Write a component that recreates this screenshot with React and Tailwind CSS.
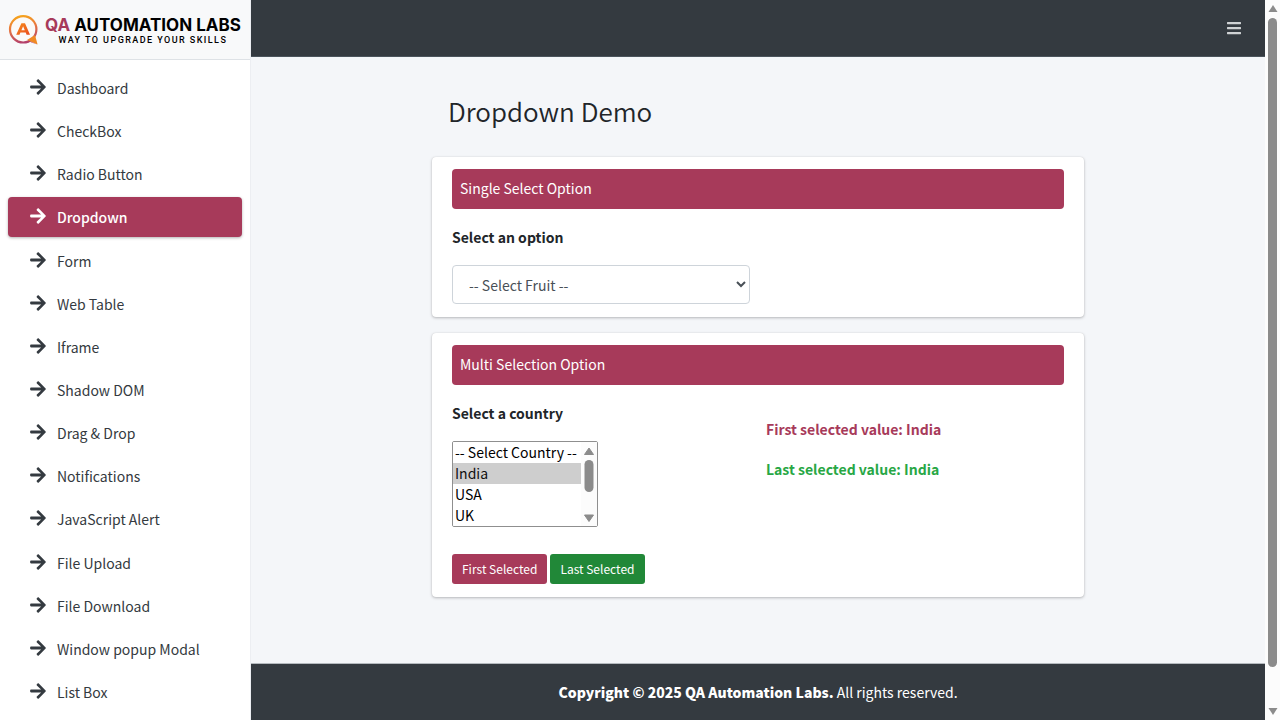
import { useState } from "react";
import { FaArrowRight, FaBars } from "react-icons/fa";

const links = [
  "Dashboard",
  "CheckBox",
  "Radio Button",
  "Dropdown",
  "Form",
  "Web Table",
  "Iframe",
  "Shadow DOM",
  "Drag & Drop",
  "Notifications",
  "JavaScript Alert",
  "File Upload",
  "File Download",
  "Window popup Modal",
  "List Box",
];

const countries = ["India", "USA", "UK", "China", "Japan", "Canada", "Brazil"];

function Logo() {
  return (
    <a href="#home" className="flex h-[60px] shrink-0 items-center gap-[7px] border-b border-[#dee2e6] bg-[#f8f9fa] pl-2">
      <svg viewBox="0 0 30 32" className="h-8 w-[30px] shrink-0" aria-hidden="true">
        <defs>
          <linearGradient id="ring" x1="0.4" y1="0" x2="0.6" y2="1">
            <stop offset="0" stopColor="#f5a21c" />
            <stop offset="0.4" stopColor="#ea7a3e" />
            <stop offset="1" stopColor="#b23f6c" />
          </linearGradient>
          <linearGradient id="letter" x1="0" y1="0" x2="1" y2="1">
            <stop offset="0" stopColor="#f7901e" />
            <stop offset="1" stopColor="#ea4a1c" />
          </linearGradient>
        </defs>
        <circle cx="15.2" cy="15.3" r="13.2" fill="#fbfaf8" stroke="url(#ring)" strokeWidth="2.2" />
        <path
          d="M13.4 9.2 H17 L22 20.8 H18.6 L17.7 18.6 H12.4 L11.5 20.8 H8.2 Z M15.1 12.3 L13.4 16.2 H16.8 Z"
          fill="url(#letter)"
          fillRule="evenodd"
        />
        <path d="M19 26 L27 21 L29.6 30.6 Z" fill="#f08a24" />
        <path d="M19 26 L29.6 30.6 L23.5 28.6 Z" fill="#b23f6c" />
      </svg>
      <span className="whitespace-nowrap pt-0.5 text-center font-[Inter,sans-serif] text-black">
        <span className="block text-[17px] font-bold leading-[18px]">
          <span className="text-[#a73a5a]">QA</span> AUTOMATION LABS
        </span>
        <span className="block font-[Roboto,sans-serif] text-[9px] leading-3 font-medium tracking-[0.16em]">WAY TO UPGRADE YOUR SKILLS</span>
      </span>
    </a>
  );
}

function Sidebar() {
  return (
    <aside className="flex w-[251px] shrink-0 flex-col overflow-hidden border-r border-[#eceef2] bg-white">
      <Logo />
      <nav className="flex max-h-[660px] flex-1 flex-col justify-between px-2 py-2">
        {links.map((name) => (
          <a
            key={name}
            href="#page"
            className={
              name === "Dropdown"
                ? "flex h-10 shrink-0 items-center gap-2.5 rounded bg-[#a73a5a] pl-[21px] font-medium text-white shadow-[0_1px_3px_rgba(0,0,0,0.3)]"
                : "flex h-10 shrink-0 items-center gap-2.5 rounded pl-[21px] text-[#343a40]"
            }
          >
            <FaArrowRight className="mb-0.5 h-[18px] w-[18px]" />
            {name}
          </a>
        ))}
      </nav>
    </aside>
  );
}

function Card({ title, children }) {
  return (
    <section className="rounded bg-white px-5 pt-3 pb-[13px] shadow-[0_0_1px_rgba(0,0,0,0.13),0_1px_3px_rgba(0,0,0,0.25)]">
      <h2 className="flex h-10 items-center rounded bg-[#a73a5a] px-2 pb-0.5 text-white">{title}</h2>
      {children}
    </section>
  );
}

function ListScrollbar() {
  return (
    <svg viewBox="0 0 16 84" className="pointer-events-none absolute top-px right-px h-[84px] w-4" aria-hidden="true">
      <rect width="16" height="84" fill="#fcfcfc" />
      <path d="M8 6 L12.5 12.5 H3.5 Z" fill="#8b8b8b" stroke="#8b8b8b" strokeLinejoin="round" />
      <rect x="3.5" y="18" width="9" height="32" rx="4.5" fill="#8b8b8b" />
      <path d="M8 79.5 L12.5 73 H3.5 Z" fill="#8b8b8b" stroke="#8b8b8b" strokeLinejoin="round" />
    </svg>
  );
}

export default function App() {
  const [picked, setPicked] = useState(["India"]);
  const [first, setFirst] = useState("India");
  const [last, setLast] = useState("India");

  return (
    <div className="flex h-screen overflow-hidden bg-[#f4f6f9] font-['Noto_Sans_CJK_SC',sans-serif] text-[14px] leading-6 text-[#212529]">
      <Sidebar />
      <div className="flex min-w-0 flex-1 flex-col">
        <header className="flex h-[57px] shrink-0 items-center justify-end border-b border-[#4b545c] bg-[#343a40] pr-[23px]">
          <button type="button" aria-label="Menu" className="text-[#cfd2d4]">
            <FaBars className="h-4 w-4" />
          </button>
        </header>

        <main className="mx-auto w-full max-w-[652px] flex-1 pt-8">
          <h1 className="mb-6 pl-4 text-[26px] leading-[44px] font-[350]">Dropdown Demo</h1>
          <div className="flex flex-col gap-4">
            <Card title="Single Select Option">
              <div className="mt-4 grid grid-cols-2 gap-4">
                <div>
                  <label htmlFor="fruit" className="mb-4 block leading-6 font-bold">
                    Select an option
                  </label>
                  <select id="fruit" className="block h-[39px] w-full rounded border border-[#ced4da] bg-white px-3 text-[#495057]">
                    <option>-- Select Fruit --</option>
                    <option>Apple</option>
                    <option>Mango</option>
                  </select>
                </div>
              </div>
            </Card>

            <Card title="Multi Selection Option">
              <div className="mt-4 grid grid-cols-2 gap-4">
                <div>
                  <label htmlFor="country" className="mb-4 block leading-6 font-bold">
                    Select a country
                  </label>
                  <div className="relative w-[146px]">
                    <select
                      id="country"
                      multiple
                      size={4}
                      value={picked}
                      onChange={(e) => setPicked(Array.from(e.target.selectedOptions, (o) => o.value))}
                      className="block h-[86px] w-full rounded-[2px] border border-[#8f8f8f] bg-white text-black"
                    >
                      <option value="" className="h-[21px] px-0.5">-- Select Country --</option>
                      {countries.map((c) => (
                        <option key={c} value={c} className="h-[21px] px-0.5">
                          {c}
                        </option>
                      ))}
                    </select>
                    <ListScrollbar />
                  </div>
                </div>
                <div className="flex flex-col gap-4 pt-4 font-bold">
                  <p className="text-[#a73a5a]">First selected value: {first}</p>
                  <p className="text-[#28a745]">Last selected value: {last}</p>
                </div>
              </div>
              <div className="mt-[27px] flex gap-[3px] text-[12px] text-white">
                <button type="button" onClick={() => setFirst(picked[0])} className="h-[30px] rounded-[3px] bg-[#a73a5a] px-2.5">
                  First Selected
                </button>
                <button type="button" onClick={() => setLast(picked[picked.length - 1])} className="h-[30px] rounded-[3px] bg-[#218838] px-2.5">
                  Last Selected
                </button>
              </div>
            </Card>
          </div>
        </main>

        <footer className="flex h-[57px] shrink-0 items-center justify-center border-t border-[#b5babf] bg-[#343a40] text-white">
          <p>
            <strong className="font-black">Copyright © 2025 QA Automation Labs.</strong> All rights reserved.
          </p>
        </footer>
      </div>

      <div aria-hidden="true" className="flex w-[15px] shrink-0 flex-col items-center gap-1 bg-[#fcfcfc] py-1">
        <svg viewBox="0 0 10 8" className="h-2 w-2.5 shrink-0 fill-[#8b8b8b]"><path d="M5 1 L9.5 8 H0.5 Z" strokeLinejoin="round" /></svg>
        <div className="mt-0.5 w-[9px] flex-1 rounded-full bg-[#8b8b8b]" />
        <svg viewBox="0 0 10 8" className="mt-[37px] h-2 w-2.5 shrink-0 fill-[#8b8b8b]"><path d="M5 7 L9.5 0 H0.5 Z" strokeLinejoin="round" /></svg>
      </div>
    </div>
  );
}
